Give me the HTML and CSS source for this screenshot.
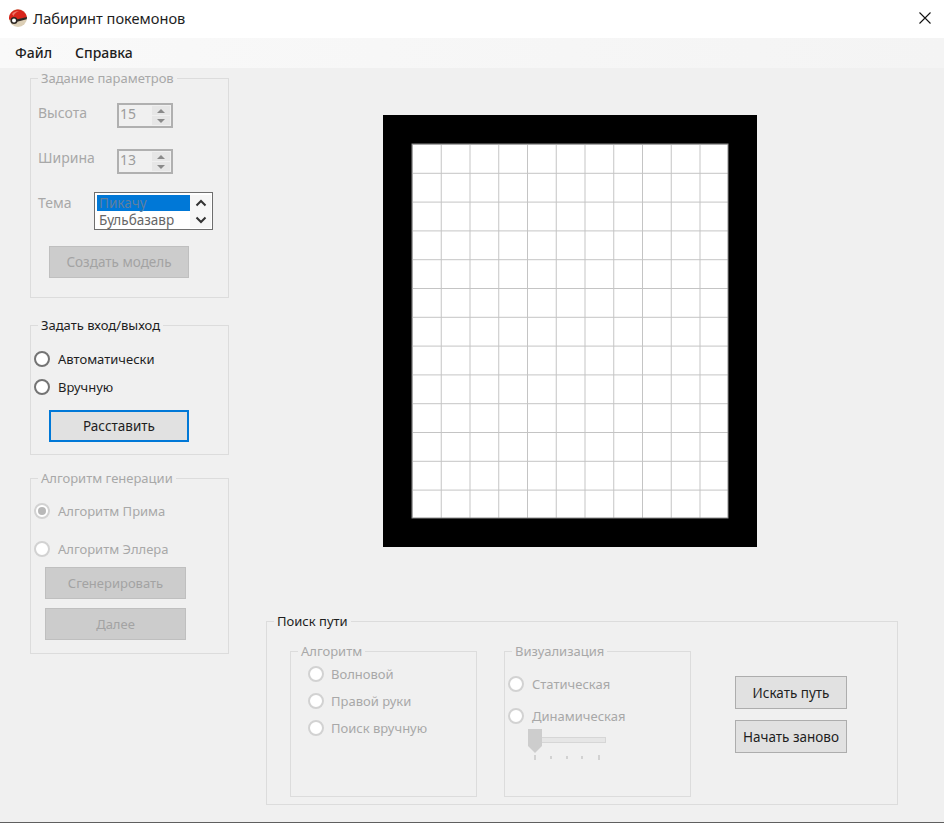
FILE: index.html
```html
<!DOCTYPE html>
<html lang="ru">
<head>
    <meta charset="UTF-8">
    <meta name="viewport" content="width=device-width, initial-scale=1.0">
    <title>Лабиринт покемонов</title>

    <link rel="stylesheet" href="styles.css">
</head>
<body>
<div class="window">
    <div class="title-bar">
        <svg class="app-icon" width="18" height="18" viewBox="0 0 18 18">
            <circle cx="9" cy="9" r="9" fill="#dccfb6"/>
            <path d="M0 10.500A9 9 0 1 1 18 8.500L5 11.500z" fill="#d8241c"/>
            <path d="M3 5C5 2.500 7.500 1.800 10 2 7.500 3 5.500 4.500 4.500 7z" fill="#ee7468"/>
            <path d="M6 10.800L18 8l-.3 2.200L7 13z" fill="#2b2622"/>
            <circle cx="5" cy="11.500" r="3.500" fill="#2b2622"/>
            <circle cx="5" cy="11.500" r="2" fill="#fff"/>
        </svg>
        <span class="app-title">Лабиринт покемонов</span>
        <svg class="close-icon" width="12" height="12" viewBox="0 0 12 12">
            <path d="M.5.500l11 11M11.500.500l-11 11" stroke="#111" stroke-width="1.100" fill="none"/>
        </svg>
    </div>

    <div class="menu-bar">
        <span class="menu-item">Файл</span>
        <span class="menu-item">Справка</span>
    </div>

    <div class="content">
        <div class="left-col">
            <fieldset class="group group-params disabled">
                <legend>Задание параметров</legend>
                <div class="group-body">
                    <div class="param-row">
                        <span class="param-label">Высота</span>
                        <div class="spinner">
                            <span class="spinner-value">15</span>
                            <div class="spinner-btns">
                                <span class="spin-btn"><i class="arrow-up"></i></span>
                                <span class="spin-btn"><i class="arrow-down"></i></span>
                            </div>
                        </div>
                    </div>
                    <div class="param-row">
                        <span class="param-label">Ширина</span>
                        <div class="spinner">
                            <span class="spinner-value">13</span>
                            <div class="spinner-btns">
                                <span class="spin-btn"><i class="arrow-up"></i></span>
                                <span class="spin-btn"><i class="arrow-down"></i></span>
                            </div>
                        </div>
                    </div>
                    <div class="param-row">
                        <span class="param-label label-theme">Тема</span>
                        <div class="listbox">
                            <div class="list-items">
                                <div class="list-item selected">Пикачу</div>
                                <div class="list-item">Бульбазавр</div>
                            </div>
                            <div class="list-scroll">
                                <svg width="12" height="8" viewBox="0 0 12 8"><path d="M1.500 6.500L6 2l4.500 4.500" stroke="#333" stroke-width="2" fill="none"/></svg>
                                <svg width="12" height="8" viewBox="0 0 12 8"><path d="M1.500 1.500L6 6l4.500-4.500" stroke="#333" stroke-width="2" fill="none"/></svg>
                            </div>
                        </div>
                    </div>
                    <button class="btn btn-disabled btn-create">Создать модель</button>
                </div>
            </fieldset>

            <fieldset class="group group-entry">
                <legend>Задать вход/выход</legend>
                <div class="group-body">
                    <label class="radio-row"><span class="radio"></span>Автоматически</label>
                    <label class="radio-row"><span class="radio"></span>Вручную</label>
                    <button class="btn btn-focus btn-place">Расставить</button>
                </div>
            </fieldset>

            <fieldset class="group group-gen disabled">
                <legend>Алгоритм генерации</legend>
                <div class="group-body">
                    <label class="radio-row"><span class="radio checked"></span>Алгоритм Прима</label>
                    <label class="radio-row"><span class="radio"></span>Алгоритм Эллера</label>
                    <button class="btn btn-disabled btn-gen">Сгенерировать</button>
                    <button class="btn btn-disabled btn-gen">Далее</button>
                </div>
            </fieldset>
        </div>

        <div class="right-col">
            <svg class="maze" width="374" height="432" viewBox="0 0 374 432">
                <defs>
                    <pattern id="cell" x="29" y="29" width="28.75" height="28.8" patternUnits="userSpaceOnUse">
                        <path d="M0 0H28.750M0 0V28.800" stroke="#c4c4c4" stroke-width="2" fill="none"/>
                    </pattern>
                </defs>
                <rect width="374" height="432" fill="#000"/>
                <rect x="29" y="29" width="316" height="374" fill="#fff"/>
                <rect x="29" y="29" width="316" height="374" fill="url(#cell)"/>
                <rect x="29" y="29" width="316" height="374" fill="none" stroke="#8c8c8c"/>
            </svg>

            <fieldset class="group group-search">
                <legend>Поиск пути</legend>
                <div class="group-body search-row">
                    <fieldset class="group group-inner group-algo disabled">
                        <legend>Алгоритм</legend>
                        <div class="group-body">
                            <label class="radio-row"><span class="radio"></span>Волновой</label>
                            <label class="radio-row"><span class="radio"></span>Правой руки</label>
                            <label class="radio-row"><span class="radio"></span>Поиск вручную</label>
                        </div>
                    </fieldset>
                    <fieldset class="group group-inner group-vis disabled">
                        <legend>Визуализация</legend>
                        <div class="group-body">
                            <label class="radio-row"><span class="radio"></span>Статическая</label>
                            <label class="radio-row"><span class="radio"></span>Динамическая</label>
                            <svg class="slider" width="78" height="31" viewBox="0 0 78 31">
                                <rect x="0.500" y="8.500" width="77" height="5" fill="#e6e6e6" stroke="#d6d6d6"/>
                                <path d="M0 0H14V17L7 24 0 17z" fill="#cdcdcd"/>
                                <path d="M7 26v5M23 27v3M39 27v3M54 27v3M71 26v5" stroke="#b4b4b4" fill="none"/>
                            </svg>
                        </div>
                    </fieldset>
                    <div class="search-btns">
                        <button class="btn btn-normal">Искать путь</button>
                        <button class="btn btn-normal">Начать заново</button>
                    </div>
                </div>
            </fieldset>
        </div>
    </div>
</div>
</body>
</html>
```

FILE: styles.css
```css
* {
    box-sizing: border-box;
}

body {
    margin: 0;
    font-family: "Noto Sans", "Open Sans", sans-serif;
    font-size: 13px;
    color: #1e1e1e;
    background-color: #f0f0f0;
    overflow: hidden;
}

.window {
    width: 944px;
    height: 823px;
    background-color: #f0f0f0;
    border-bottom: 1px solid #5f5f5f;
    display: flex;
    flex-direction: column;
}

.title-bar {
    height: 38px;
    background-color: #fff;
    display: flex;
    align-items: center;
    padding: 0 0 2px 9px;
}

.app-title {
    margin-left: 6px;
    font-size: 14.600px;
}

.close-icon {
    margin-left: auto;
    margin-right: 13px;
}

.menu-bar {
    height: 30px;
    background: linear-gradient(to right, #f9f9f9, #f4f4f4);
    display: flex;
    align-items: center;
    padding: 0 0 2px 15px;
    gap: 23px;
    font-size: 14px;
    font-weight: 500;
}

.content {
    display: flex;
    flex: 1;
}

.left-col {
    width: 199px;
    margin-left: 30px;
    padding-top: 1px;
    display: flex;
    flex-direction: column;
    gap: 18px;
}

.right-col {
    margin-left: 37px;
    padding-top: 47px;
}

.maze {
    display: block;
    margin-left: 117px;
}

/* groupbox */
.group {
    margin: 0;
    min-width: 0;
    border: 1px solid #dcdcdc;
    padding: 0;
}

.group legend {
    height: 18px;
    line-height: 18px;
    padding: 0 3px;
    margin-left: 7px;
    white-space: nowrap;
}

.disabled {
    color: #a8a8a8;
}

.group-params {
    height: 229px;
}

.group-params .group-body {
    padding: 16px 0 0 7px;
}

.group-entry {
    height: 139px;
}

.group-entry .group-body {
    padding: 11px 0 0 3px;
}

.group-gen {
    height: 185px;
    margin-top: -4px;
}

.group-gen .group-body {
    padding: 10px 0 0 3px;
}

.group-search {
    width: 632px;
    height: 193px;
    margin-top: 65px;
}

.search-row {
    display: flex;
    align-items: flex-start;
    padding: 12px 0 0 23px;
}

.group-inner {
    width: 187px;
    height: 155px;
}

.group-algo .group-body {
    padding: 0 0 0 17px;
}

.group-vis {
    margin-left: 27px;
}

.group-vis .group-body {
    padding: 11px 0 0 3px;
}

.search-btns {
    margin-left: 44px;
    margin-top: 34px;
    display: flex;
    flex-direction: column;
    gap: 11px;
}

/* numeric inputs */
.param-row {
    display: flex;
    align-items: flex-start;
    margin-bottom: 21px;
}

.param-row:nth-child(2) {
    margin-bottom: 18px;
}

.param-row:nth-child(3) {
    margin-bottom: 16px;
}

.param-label {
    width: 79px;
    font-size: 14px;
    line-height: 20px;
}

.param-row:nth-child(2) .param-label {
    line-height: 18px;
}

.label-theme {
    width: 56px;
    margin-top: 1px;
}

.spinner {
    width: 56px;
    height: 25px;
    border: 2px solid #b0b0b0;
    display: flex;
    padding: 1px;
    color: #9c9c9c;
    font-size: 14px;
}

.spinner-value {
    flex: 1;
    line-height: 16px;
}

.spinner-btns {
    width: 18px;
    display: flex;
    flex-direction: column;
    gap: 1px;
}

.spin-btn {
    flex: 1;
    background-color: #e6e6e6;
    display: flex;
    align-items: center;
    justify-content: center;
}

.arrow-up {
    border-left: 4px solid transparent;
    border-right: 4px solid transparent;
    border-bottom: 4px solid #8a8a8a;
}

.arrow-down {
    border-left: 4px solid transparent;
    border-right: 4px solid transparent;
    border-top: 4px solid #8a8a8a;
}

/* theme list */
.listbox {
    width: 119px;
    height: 38px;
    border: 1px solid #6e6e6e;
    background-color: #fff;
    display: flex;
    padding: 2px 1px 1px 2px;
}

.list-items {
    width: 93px;
}

.list-item {
    height: 17px;
    line-height: 17px;
    padding-left: 2px;
    font-size: 13.500px;
    color: #666;
}

.list-item.selected {
    height: 16px;
    line-height: 16px;
    margin-bottom: 1px;
    background-color: #0078d7;
    color: #5f7f9e;
}

.list-scroll {
    flex: 1;
    background-color: #f6f6f6;
    display: flex;
    flex-direction: column;
    align-items: center;
    justify-content: space-around;
}

/* buttons */
.btn {
    display: block;
    font-family: inherit;
    font-size: 13.500px;
    line-height: 18px;
    padding: 0;
    cursor: pointer;
}

.btn-disabled {
    width: 140px;
    height: 32px;
    background-color: #cccccc;
    border: 1px solid #bfbfbf;
    color: #a3a3a3;
}

.btn-create {
    margin-left: 11px;
}

.btn-gen {
    width: 141px;
    margin-left: 11px;
    margin-top: 9px;
    font-size: 13px;
}

.radio-row + .btn-gen {
    margin-top: 4px;
}

.btn-focus {
    width: 140px;
    height: 32px;
    margin-left: 15px;
    margin-top: 9px;
    background-color: #e1e1e1;
    border: 2px solid #0078d7;
    color: #1e1e1e;
}

.btn-normal {
    width: 112px;
    height: 33px;
    background-color: #e1e1e1;
    border: 1px solid #adadad;
    color: #1e1e1e;
}

/* radio buttons */
.radio-row {
    display: flex;
    align-items: center;
    height: 28px;
    gap: 8px;
}

.group-gen .radio-row + .radio-row {
    margin-top: 10px;
}

.group-algo .radio-row {
    height: 27px;
    gap: 7px;
}

.group-vis .radio-row {
    height: 26px;
}

.group-vis .radio-row + .radio-row {
    margin-top: 6px;
}

.radio {
    width: 16px;
    height: 16px;
    border-radius: 50%;
    border: 2px solid #747474;
    background-color: #fff;
    flex-shrink: 0;
    display: flex;
    align-items: center;
    justify-content: center;
}

.disabled .radio {
    border-color: #d2d2d2;
}

.radio.checked::after {
    content: "";
    width: 8px;
    height: 8px;
    border-radius: 50%;
    background-color: #b8b8b8;
}

.slider {
    display: block;
    margin-left: 20px;
}
```
